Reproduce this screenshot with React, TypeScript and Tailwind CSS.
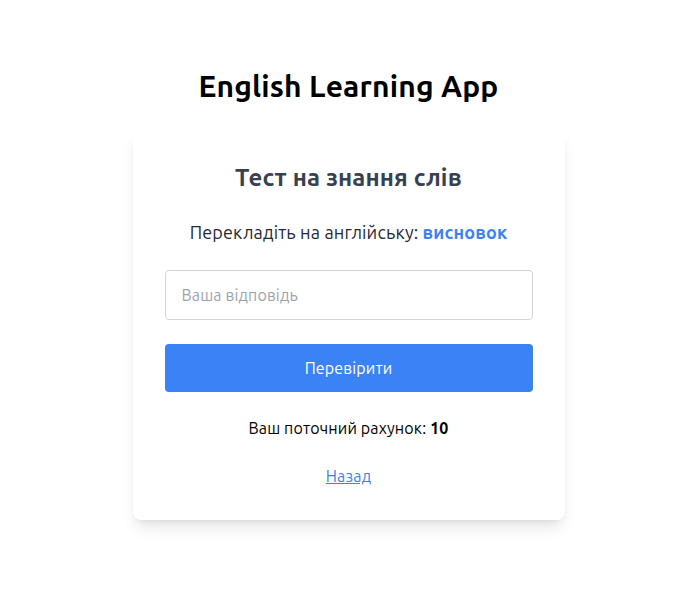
export default function App() {
  return (
    <div
      className="min-h-screen bg-white flex flex-col items-center pt-[68px] tracking-[0.15px]"
      style={{ fontFamily: 'Ubuntu, "Noto Sans", "Open Sans", sans-serif' }}
    >
      <h1 className="text-3xl font-bold text-black mb-[25px]">English Learning App</h1>
      <div className="w-[432px] bg-white rounded-lg shadow-lg px-8 pt-[33px] pb-8 flex flex-col items-center">
        <h2 className="text-2xl font-bold text-[#374151] mb-6">Тест на знання слів</h2>
        <p className="text-lg text-[#1f2937] mb-6">
          Перекладіть на англійську: <span className="font-bold text-[#3b82f6]">висновок</span>
        </p>
        <input
          className="w-full border border-[#d1d5db] rounded px-4 py-3 text-base placeholder-[#9ca3af] mb-6 outline-none"
          placeholder="Ваша відповідь"
        />
        <button className="w-full bg-[#3b82f6] text-white rounded py-3 text-base mb-6">Перевірити</button>
        <p className="text-base text-black mb-6">
          Ваш поточний рахунок: <span className="font-bold">10</span>
        </p>
        <a href="#" className="text-base text-[#3b82f6] underline">Назад</a>
      </div>
    </div>
  );
}
